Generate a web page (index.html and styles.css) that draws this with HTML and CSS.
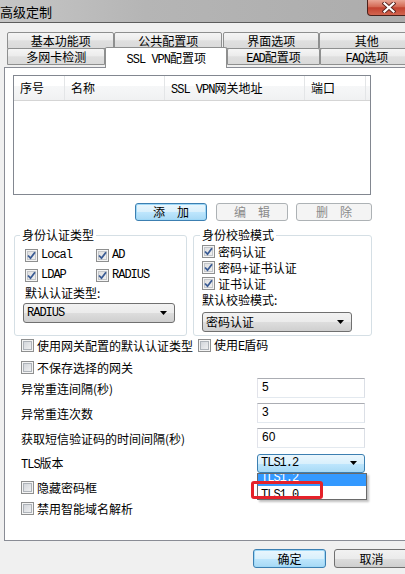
FILE: index.html
```html
<!DOCTYPE html>
<html lang="zh-CN">
<head>
<meta charset="utf-8">
<link rel="stylesheet" href="styles.css">
</head>
<body>
<div class="window">
  <div class="titlebar">
    <span class="title">高级定制</span>
    <div class="close">
      <svg width="14" height="11" viewBox="0 0 14 11"><path d="M2.5 1.5 L11.5 9.5 M11.5 1.5 L2.5 9.5" stroke="#5a2620" stroke-width="4" stroke-linecap="square"/><path d="M2.5 1.5 L11.5 9.5 M11.5 1.5 L2.5 9.5" stroke="#fff" stroke-width="2.2" stroke-linecap="square"/></svg>
    </div>
  </div>
  <div class="body">
    <div class="tabrow r1">
      <div class="tab t1">基本功能项</div>
      <div class="tab t2">公共配置项</div>
      <div class="tab t3">界面选项</div>
      <div class="tab t4">其他</div>
    </div>
    <div class="tabrow r2">
      <div class="tab t5">多网卡检测</div>
      <div class="tab sel t6"><span class="en">SSL VPN</span>配置项</div>
      <div class="tab t7"><span class="en">EAD</span>配置项</div>
      <div class="tab t8"><span class="en">FAQ</span>选项</div>
    </div>
    <div class="panel">
      <div class="list">
        <div class="lhead">
          <div class="col c1">序号</div>
          <div class="col c2">名称</div>
          <div class="col c3"><span class="en">SSL VPN</span>网关地址</div>
          <div class="col c4">端口</div>
        </div>
      </div>
      <div class="btnrow">
        <div class="btn primary b-add">添　加</div>
        <div class="btn disabled b-edit">编　辑</div>
        <div class="btn disabled b-del">删　除</div>
      </div>
      <div class="groups">
        <fieldset class="group g1">
          <legend>身份认证类型</legend>
          <div class="cbrow">
            <div class="cbitem"><span class="cb on"><svg width="9" height="9" viewBox="0 0 9 9"><path d="M1 4.5 L3.5 7.2 L8 1.2" fill="none" stroke="#3a5b94" stroke-width="1.8"/></svg></span><span class="en txt">Local</span></div>
            <div class="cbitem"><span class="cb on"><svg width="9" height="9" viewBox="0 0 9 9"><path d="M1 4.5 L3.5 7.2 L8 1.2" fill="none" stroke="#3a5b94" stroke-width="1.8"/></svg></span><span class="en txt">AD</span></div>
          </div>
          <div class="cbrow second">
            <div class="cbitem"><span class="cb on"><svg width="9" height="9" viewBox="0 0 9 9"><path d="M1 4.5 L3.5 7.2 L8 1.2" fill="none" stroke="#3a5b94" stroke-width="1.8"/></svg></span><span class="en txt">LDAP</span></div>
            <div class="cbitem"><span class="cb on"><svg width="9" height="9" viewBox="0 0 9 9"><path d="M1 4.5 L3.5 7.2 L8 1.2" fill="none" stroke="#3a5b94" stroke-width="1.8"/></svg></span><span class="en txt">RADIUS</span></div>
          </div>
          <div class="glabel">默认认证类型:</div>
          <div class="select s1"><span class="en">RADIUS</span><svg width="7" height="4" viewBox="0 0 7 4"><path d="M0 0H7L3.5 4Z"/></svg></div>
        </fieldset>
        <fieldset class="group g2">
          <legend>身份校验模式</legend>
          <div class="cbline"><span class="cb on"><svg width="9" height="9" viewBox="0 0 9 9"><path d="M1 4.5 L3.5 7.2 L8 1.2" fill="none" stroke="#3a5b94" stroke-width="1.8"/></svg></span><span class="txt">密码认证</span></div>
          <div class="cbline r"><span class="cb on"><svg width="9" height="9" viewBox="0 0 9 9"><path d="M1 4.5 L3.5 7.2 L8 1.2" fill="none" stroke="#3a5b94" stroke-width="1.8"/></svg></span><span class="txt">密码+证书认证</span></div>
          <div class="cbline r"><span class="cb on"><svg width="9" height="9" viewBox="0 0 9 9"><path d="M1 4.5 L3.5 7.2 L8 1.2" fill="none" stroke="#3a5b94" stroke-width="1.8"/></svg></span><span class="txt">证书认证</span></div>
          <div class="glabel g2l">默认校验模式:</div>
          <div class="select s2"><span>密码认证</span><svg width="7" height="4" viewBox="0 0 7 4"><path d="M0 0H7L3.5 4Z"/></svg></div>
        </fieldset>
      </div>
      <div class="opts">
        <div class="cbline o1"><span class="cb"></span><span class="txt">使用网关配置的默认认证类型</span><span class="cb gap"></span><span class="txt">使用<span class="en">E</span>盾码</span></div>
        <div class="cbline o2"><span class="cb"></span><span class="txt">不保存选择的网关</span></div>
        <div class="field f1"><span class="lbl">异常重连间隔(秒)</span><div class="input">5</div></div>
        <div class="field"><span class="lbl">异常重连次数</span><div class="input">3</div></div>
        <div class="field"><span class="lbl">获取短信验证码的时间间隔(秒)</span><div class="input">60</div></div>
        <div class="field tls"><span class="lbl"><span class="en">TLS</span>版本</span>
          <div class="select open"><span class="en">TLS1.2</span><svg width="7" height="4" viewBox="0 0 7 4"><path d="M0 0H7L3.5 4Z"/></svg></div>
          <div class="dropdown">
            <div class="item hl"><span class="en">TLS1.2</span></div>
            <div class="item second"><span class="en">TLS1.0</span></div>
          </div>
          <div class="mark"></div>
        </div>
        <div class="cbline o3"><span class="cb"></span><span class="txt">隐藏密码框</span></div>
        <div class="cbline o4"><span class="cb"></span><span class="txt">禁用智能域名解析</span></div>
      </div>
    </div>
    <div class="footer">
      <div class="btn primary b-ok">确定</div>
      <div class="btn b-cancel">取消</div>
    </div>
  </div>
</div>
</body>
</html>
```

FILE: styles.css
```css
* { box-sizing: border-box; }
html, body { margin: 0; padding: 0; }
body {
  width: 405px;
  height: 574px;
  overflow: hidden;
  background: #f0f0f0;
  font-family: "Noto Sans CJK SC", "Liberation Sans", sans-serif;
  font-size: 12px;
  color: #000;
}
.en { font-family: "Liberation Mono", monospace; font-size: 12px; letter-spacing: -1px; }
.window { width: 414px; }

.titlebar {
  height: 23px;
  display: flex;
  justify-content: space-between;
  align-items: flex-start;
  background: linear-gradient(to right, #c6c6c6, #b5b5b5 35%, #acacac);
  border-bottom: 1px solid #5c5c5c;
}
.title { font-size: 13px; line-height: 15px; padding-top: 4px; }
.close {
  width: 43px;
  height: 16px;
  margin-right: 4px;
  border: 1px solid #4a211b;
  border-top: none;
  border-radius: 0 0 4px 4px;
  background: linear-gradient(#e9a695, #d46a55 45%, #c2422f 52%, #d36550);
  display: flex;
  align-items: center;
  justify-content: center;
}

.body { padding: 9px 0 0 4px; }
.tabrow { display: flex; padding-left: 3px; }
.r2 { height: 19px; margin-top: -1px; align-items: flex-start; }
.tab {
  height: 17px;
  border: 1px solid #8e8f8f;
  border-radius: 2px 2px 0 0;
  background: linear-gradient(#f5f5f5, #ececec 45%, #dfdfdf 52%, #dadada);
  text-align: center;
  line-height: 15px;
  white-space: nowrap;
  overflow: hidden;
}
.t1 { width: 108px; }
.t2 { width: 108px; }
.t3 { width: 97px; margin-left: 1px; }
.t4 { width: 95px; }
.t5 { width: 99px; }
.t6 { width: 123px; }
.t7 { width: 93px; }
.t8 { width: 95px; }
.tab.sel {
  position: relative;
  z-index: 2;
  height: 21px;
  margin-top: -1px;
  background: #fff;
  border-bottom: none;
  line-height: 20px;
}

.panel {
  height: 474px;
  border: 1px solid #898c95;
  background: #fff;
}
.list {
  margin: 7px 0 0 8px;
  width: 358px;
  height: 120px;
  border: 1px solid #828790;
  background: #fff;
}
.lhead {
  display: flex;
  height: 25px;
  border-bottom: 1px solid #d5d5d5;
  background: linear-gradient(#ffffff, #ffffff 40%, #f6f7f8 42%, #f0f1f2);
}
.col {
  border-right: 1px solid #e3e5e7;
  padding-left: 6px;
  line-height: 23px;
  white-space: nowrap;
}
.c1 { width: 51px; }
.c2 { width: 100px; }
.c3 { width: 140px; }
.c4 { width: 61px; }

.btnrow { display: flex; margin: 8px 0 0 130px; }
.btn {
  height: 18px;
  border: 1px solid #707070;
  border-radius: 3px;
  background: linear-gradient(#f2f2f2, #ebebeb 50%, #dddddd 51%, #cfcfcf);
  text-align: center;
  line-height: 16px;
}
.btn.primary {
  border-color: #3c7fb1;
  background: linear-gradient(#eaf6fd, #d9f0fc 50%, #bee6fd 51%, #a7d9f5);
  box-shadow: inset 0 0 0 1px #9fd8f7;
}
.btn.disabled {
  border-color: #adb2b5;
  background: #f4f4f4;
  color: #8a8a8a;
}
.b-add { width: 72px; }
.b-edit { width: 72px; margin-left: 9px; }
.b-del { width: 76px; margin-left: 8px; }

.groups { display: flex; margin: 8px 0 0 9px; align-items: stretch; }
.group {
  margin: 0;
  border: 1px solid #d5dfe5;
  border-radius: 3px;
  min-width: 0;
}
.group legend { padding: 0 2px; line-height: 12px; height: 12px; }
.g1 { width: 173px; padding: 8px 0 12px 10px; }
.g1 legend { margin-left: -5px; }
.g2 { width: 179px; margin-left: 6px; padding: 4px 0 3px 8px; }
.g2 legend { margin-left: -2px; }

.cbrow { display: flex; height: 13px; align-items: center; }
.cbrow.second { margin-top: 7px; }
.cbitem { display: flex; align-items: center; width: 71px; }
.cb {
  width: 13px;
  height: 13px;
  flex: none;
  border: 1px solid #8e8f8f;
  padding: 1px;
  background: #fff;
  display: flex;
  align-items: center;
  justify-content: center;
  background-clip: padding-box;
  box-shadow: inset 0 0 0 1px #f4f4f4, inset 0 0 0 2px #aeb3b9;
  background-image: linear-gradient(135deg, #cbcfd5, #f6f6f6);
}
.cb.on { background-image: linear-gradient(135deg, #dcdcdc, #f3f3f3); box-shadow: inset 0 0 0 1px #f4f4f4, inset 0 0 0 2px #c3c6ca; }
.cb svg { display: block; }
.txt { margin-left: 3px; white-space: nowrap; line-height: 13px; }
.glabel { margin-top: 4px; line-height: 13px; height: 13px; }
.g2l { margin-top: 3px; }
.select {
  height: 20px;
  border: 1px solid #707070;
  border-radius: 3px;
  background: linear-gradient(#f2f2f2, #ebebeb 50%, #dddddd 51%, #cfcfcf);
  display: flex;
  align-items: center;
  justify-content: space-between;
  padding: 0 7px 0 3px;
  line-height: 16px;
}
.s1 { width: 152px; margin: 4px 0 0 -2px; }
.s2 { width: 150px; margin-top: 6px; }

.cbline { display: flex; align-items: center; height: 13px; }
.cbline.r { margin-top: 3px; }
.cb.gap { margin-left: 5px; }

.opts { padding-left: 16px; }
.o1 { margin-top: 3px; }
.o2 { margin-top: 9px; }
.o3 { margin-top: 8px; }
.o4 { margin-top: 8px; }
.field { display: flex; align-items: center; height: 20px; margin-top: 5px; }
.field.f1 { margin-top: 4px; }
.lbl { width: 236px; flex: none; white-space: nowrap; }
.input {
  width: 108px;
  height: 20px;
  border: 1px solid;
  border-color: #abadb3 #dbdfe6 #e3e9ef #e2e3ea;
  background: #fff;
  padding-left: 4px;
  line-height: 17px;
  font-family: "Liberation Sans", sans-serif;
  font-size: 12px;
}
.tls { position: relative; }
.select.open {
  width: 108px;
  height: 19px;
  border-color: #3c7fb1;
  background: linear-gradient(#eaf6fd, #d9f0fc 50%, #bee6fd 51%, #a7d9f5);
}
.dropdown {
  position: absolute;
  left: 236px;
  top: 20px;
  width: 110px;
  border: 1px solid #6a6a6a;
  background: #fff;
  box-shadow: 2px 2px 2px rgba(0, 0, 0, 0.25);
  z-index: 3;
}
.item { padding-left: 3px; white-space: nowrap; }
.item.hl { background: #3399ff; color: #fff; height: 12px; line-height: 12px; overflow: hidden; }
.item.hl .en { display: block; margin-top: -2px; }
.item.second { height: 13px; line-height: 13px; }
.mark {
  position: absolute;
  left: 230px;
  top: 28px;
  width: 72px;
  height: 18px;
  border: 3px solid #e5222a;
  border-radius: 3px;
  z-index: 4;
}

.footer { display: flex; margin: 8px 0 0 249px; }
.b-ok { width: 73px; height: 19px; line-height: 17px; }
.b-cancel { width: 75px; height: 19px; line-height: 17px; margin-left: 8px; }
```
